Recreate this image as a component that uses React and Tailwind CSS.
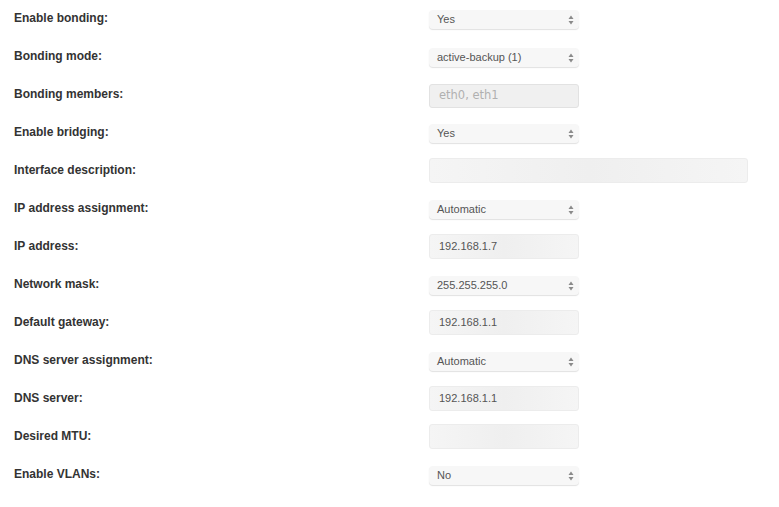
import React from "react";

const rows = [
  { label: "Enable bonding:", type: "select", value: "Yes" },
  { label: "Bonding mode:", type: "select", value: "active-backup (1)" },
  { label: "Bonding members:", type: "disabled", value: "eth0, eth1" },
  { label: "Enable bridging:", type: "select", value: "Yes" },
  { label: "Interface description:", type: "wide", value: "" },
  { label: "IP address assignment:", type: "select", value: "Automatic" },
  { label: "IP address:", type: "input", value: "192.168.1.7" },
  { label: "Network mask:", type: "select", value: "255.255.255.0" },
  { label: "Default gateway:", type: "input", value: "192.168.1.1" },
  { label: "DNS server assignment:", type: "select", value: "Automatic" },
  { label: "DNS server:", type: "input", value: "192.168.1.1" },
  { label: "Desired MTU:", type: "input", value: "" },
  { label: "Enable VLANs:", type: "select", value: "No" },
];

function Arrows() {
  return (
    <svg width="6" height="10" viewBox="0 0 6 10" className="shrink-0">
      <path d="M3 0.5 L5.5 4 L0.5 4 Z" fill="#8a8a8a" />
      <path d="M3 9.5 L5.5 6 L0.5 6 Z" fill="#8a8a8a" />
    </svg>
  );
}

function Control({ row }) {
  if (row.type === "select") {
    return (
      <div className="mt-[10px] flex h-[19px] w-[150px] items-center justify-between rounded-[4px] bg-[#f7f7f7] pl-[8px] pr-[5px] text-[11px] leading-[13px] text-[#555] shadow-[0_1px_1px_rgba(0,0,0,0.12)]">
        <span>{row.value}</span>
        <Arrows />
      </div>
    );
  }
  if (row.type === "disabled") {
    return (
      <div className="mt-[8px] flex h-[24px] w-[150px] items-center rounded-[3px] border border-[#e2e2e2] bg-[#f0f0f0] pl-[9px] text-[11.5px] text-[#b0b0b0] [font-family:'DejaVu_Sans',sans-serif]">
        {row.value}
      </div>
    );
  }
  if (row.type === "wide") {
    return (
      <div className="mt-[6px] h-[25px] w-[319px] rounded-[3px] border border-[#ececec] bg-[linear-gradient(90deg,#f5f5f5,#efefef_50%,#f5f5f5)]" />
    );
  }
  return (
    <div className="mt-[6px] flex h-[25px] w-[150px] items-center rounded-[3px] border border-[#ececec] bg-[linear-gradient(90deg,#f5f5f5,#efefef_50%,#f5f5f5)] pl-[9px] text-[11px] text-[#555]">
      {row.value}
    </div>
  );
}

export default function App() {
  return (
    <div className="h-[507px] w-[779px] bg-white [font-family:'Liberation_Sans',Arial,sans-serif]">
      {rows.map((row, i) => (
        <div key={i} className="flex h-[38px] items-start">
          <div className="w-[429px] pl-[14px] pt-[10px] text-[12px] font-bold leading-[16px] text-[#333]">
            {row.label}
          </div>
          <Control row={row} />
        </div>
      ))}
    </div>
  );
}
